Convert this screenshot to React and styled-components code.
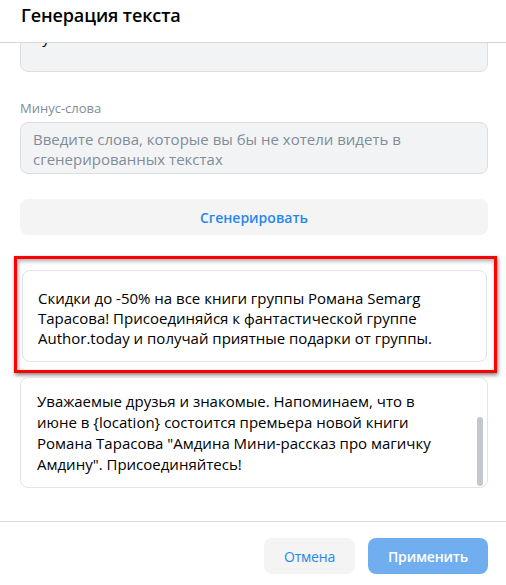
import React, { useLayoutEffect, useRef } from 'react';
import styled, { createGlobalStyle } from 'styled-components';

const GlobalStyle = createGlobalStyle`
  html, body {
    margin: 0;
    padding: 0;
    background: #ffffff;
  }

  body {
    font-family: 'Open Sans', 'Noto Sans', sans-serif;
    color: #000000;
    -webkit-font-smoothing: antialiased;
  }

  * {
    box-sizing: border-box;
  }
`;

const results = [
  {
    id: 1,
    text: 'Скидки до -50% на все книги группы Романа Semarg Тарасова! Присоединяйся к фантастической группе Author.today и получай приятные подарки от группы.',
    selected: true,
  },
  {
    id: 2,
    text: 'Уважаемые друзья и знакомые. Напоминаем, что в июне в {location} состоится премьера новой книги Романа Тарасова "Амдина Мини-рассказ про магичку Амдину". Присоединяйтесь!',
    selected: false,
  },
];

const App = () => {
  const bodyRef = useRef(null);

  // the modal body is scrolled all the way down
  useLayoutEffect(() => {
    if (bodyRef.current) {
      bodyRef.current.scrollTop = bodyRef.current.scrollHeight;
    }
  }, []);

  return (
    <>
      <GlobalStyle />
      <Modal>
        <Header>
          <Title>Генерация текста</Title>
        </Header>

        <Body ref={bodyRef}>
          <TextBox $minHeight={52}>Купить книги</TextBox>

          <Field>
            <Label>Минус-слова</Label>
            <TextBox $placeholder>
              Введите слова, которые вы бы не хотели видеть в сгенерированных
              текстах
            </TextBox>
          </Field>

          <GenerateButton>Сгенерировать</GenerateButton>

          <Results>
            {results.map(item =>
              item.selected ? (
                <Highlight key={item.id}>
                  <ResultCard>{item.text}</ResultCard>
                </Highlight>
              ) : (
                <ResultCard key={item.id} $scrollable>
                  {item.text}
                  <ScrollThumb />
                </ResultCard>
              )
            )}
          </Results>
        </Body>

        <Footer>
          <FooterButton $mode="secondary">Отмена</FooterButton>
          <FooterButton $mode="primary" disabled>
            Применить
          </FooterButton>
        </Footer>
      </Modal>
    </>
  );
};

const Modal = styled.div`
  display: flex;
  flex-direction: column;
  width: 506px;
  height: 585px;
  background: #ffffff;
  overflow: hidden;
`;

const Header = styled.div`
  flex: 0 0 auto;
  height: 43px;
  padding: 3px 20px 0 21px;
  border-bottom: 1px solid #d7d8d9;
`;

const Title = styled.h2`
  margin: 0;
  font-size: 18px;
  line-height: 24px;
  font-weight: 600;
  color: #000000;
  letter-spacing: -0.1px;
`;

const Body = styled.div`
  flex: 1 1 auto;
  min-height: 0;
  padding: 0 18px 33px 20px;
  overflow-y: auto;
  scrollbar-width: none;

  &::-webkit-scrollbar {
    display: none;
  }
`;

const Field = styled.div`
  display: flex;
  flex-direction: column;
  gap: 6px;
  margin-top: 28px;
`;

const Label = styled.div`
  font-size: 13px;
  line-height: 16px;
  color: #818c99;
`;

const TextBox = styled.div`
  min-height: ${props => (props.$minHeight ? `${props.$minHeight}px` : 'auto')};
  padding: 6px 12px 4px;
  border: 1px solid #dcdee1;
  border-radius: 8px;
  background: #f2f3f5;
  font-size: 15px;
  line-height: 20px;
  white-space: pre-line;
  color: ${props => (props.$placeholder ? '#818c99' : '#000000')};
`;

const GenerateButton = styled.button`
  display: block;
  width: 100%;
  height: 36px;
  margin-top: 25px;
  border: 0;
  border-radius: 8px;
  background: #f4f4f5;
  font-family: inherit;
  font-size: 14px;
  font-weight: 600;
  color: #2688eb;
  cursor: pointer;
`;

const Results = styled.div`
  display: flex;
  flex-direction: column;
  gap: 4px;
  margin-top: 21px;
`;

const Highlight = styled.div`
  margin: 0 -9px 0 -6px;
  padding: 11px 7px 8px 5px;
  border: 3px solid #ff0000;
  background: #ffffff;
  box-shadow:
    1px 2px 4px rgba(0, 0, 0, 0.5),
    inset 1px 2px 4px rgba(0, 0, 0, 0.35);
`;

const ResultCard = styled.div`
  position: relative;
  height: ${props => (props.$scrollable ? '111px' : 'auto')};
  padding: ${props => (props.$scrollable ? '13px 40px 0 16px' : '17px 40px 13px 15px')};
  border: 1px solid #e3e4e6;
  border-radius: 8px;
  background: #ffffff;
  font-size: 15px;
  line-height: ${props => (props.$scrollable ? '21px' : '20px')};
  color: #000000;
  overflow: hidden;
`;

const ScrollThumb = styled.div`
  position: absolute;
  top: 39px;
  right: 4px;
  width: 6px;
  height: 69px;
  border-radius: 3px;
  background: #c4c8cc;
`;

const Footer = styled.div`
  flex: 0 0 auto;
  display: flex;
  justify-content: flex-end;
  gap: 13px;
  padding: 16px 18px 11px;
  border-top: 1px solid #d7d8d9;
`;

const FooterButton = styled.button`
  height: 36px;
  padding: 0 20px;
  border: 0;
  border-radius: 8px;
  font-family: inherit;
  font-size: 14px;
  font-weight: ${props => (props.$mode === 'primary' ? 600 : 500)};
  letter-spacing: -0.2px;
  color: ${props => (props.$mode === 'primary' ? '#ffffff' : '#2688eb')};
  background: ${props => (props.$mode === 'primary' ? '#71aef0' : '#f4f4f5')};
  cursor: pointer;
`;

export default App;
